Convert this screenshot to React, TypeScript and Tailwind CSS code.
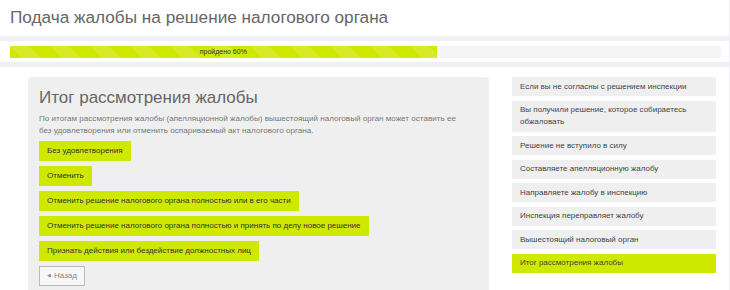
import React from "react";

const options = [
  "Без удовлетворения",
  "Отменить",
  "Отменить решение налогового органа полностью или в его части",
  "Отменить решение налогового органа полностью и принять по делу новое решение",
  "Признать действия или бездействие должностных лиц",
];

const steps = [
  "Если вы не согласны с решением инспекции",
  "Вы получили решение, которое собираетесь обжаловать",
  "Решение не вступило в силу",
  "Составляете апелляционную жалобу",
  "Направляете жалобу в инспекцию",
  "Инспекция переправляет жалобу",
  "Вышестоящий налоговый орган",
  "Итог рассмотрения жалобы",
];

export default function App() {
  return (
    <div
      className="w-[730px] h-[290px] overflow-hidden bg-[#eff0f4] flex flex-col gap-[5px] pr-[1px]"
      style={{ fontFamily: '"Liberation Sans", Arial, sans-serif' }}
    >
      <div className="h-[36px] shrink-0 bg-white flex items-center pl-[10px]">
        <h1 className="text-[17.2px] leading-none text-[#666] font-normal">
          Подача жалобы на решение налогового органа
        </h1>
      </div>
      <div className="h-[21px] shrink-0 bg-white pl-[10px] pr-[8px] pt-[5px]">
        <div className="h-[12px] bg-[#f5f5f5] flex">
          <div
            className="w-[60%] h-full bg-[#cfe800] flex items-center justify-center text-[7px] text-[#333]"
            style={{
              backgroundImage:
                "linear-gradient(45deg, rgba(255,255,255,.15) 25%, transparent 25%, transparent 50%, rgba(255,255,255,.15) 50%, rgba(255,255,255,.15) 75%, transparent 75%, transparent)",
              backgroundSize: "40px 40px",
            }}
          >
            пройдено 60%
          </div>
        </div>
      </div>
      <div className="flex-1 bg-white flex pt-[10px] pl-[28px]">
        <div className="w-[461px] shrink-0 bg-[#efefef] rounded-[3px] pl-[11px] pt-[12px] h-[240px]">
          <h2 className="text-[17px] leading-none text-[#666] font-normal">
            Итог рассмотрения жалобы
          </h2>
          <p className="mt-[7px] text-[8.1px] leading-[12px] text-[#777] w-[422px]">
            По итогам рассмотрения жалобы (апелляционной жалобы) вышестоящий налоговый орган может оставить ее без удовлетворения или отменить оспариваемый акт налогового органа.
          </p>
          <div className="mt-[4px] flex flex-col items-start gap-[5px]">
            {options.map((o) => (
              <div
                key={o}
                className="h-[20px] bg-[#cfe800] px-[8px] flex items-center text-[8px] text-[#333]"
              >
                {o}
              </div>
            ))}
            <div className="h-[20px] border border-[#bbb] bg-[#f7f7f7] px-[7px] flex items-center gap-[3px] text-[8px] text-[#888]">
              <span className="text-[5px]">◀</span>
              <span>Назад</span>
            </div>
          </div>
        </div>
        <div className="ml-[23px] w-[204px] shrink-0 flex flex-col gap-[4.5px]">
          {steps.map((s, i) => (
            <div
              key={s}
              className={
                "px-[8px] py-[3.5px] text-[8px] leading-[12px] text-[#444] " +
                (i === steps.length - 1 ? "bg-[#cfe800]" : "bg-[#efefef]")
              }
            >
              {s}
            </div>
          ))}
        </div>
      </div>
    </div>
  );
}
